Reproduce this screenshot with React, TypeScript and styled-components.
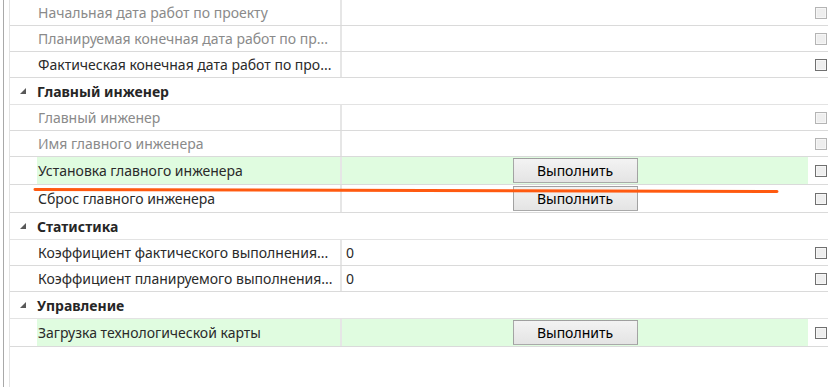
import React from 'react';
import styled, { createGlobalStyle } from 'styled-components';

const GlobalStyle = createGlobalStyle`
  html, body {
    margin: 0;
    padding: 0;
    background: #ffffff;
  }
  body {
    font-family: "Noto Sans", "Open Sans", sans-serif;
    font-size: 14px;
  }
`;

const Screen = styled.div`
  position: relative;
  width: 828px;
  height: 387px;
  overflow: hidden;
  box-sizing: border-box;
  display: flex;
  padding-left: 3px;
`;

const OuterEdge = styled.div`
  flex: 1;
  display: flex;
  border-left: 1px solid #a9a9a9;
  padding-left: 5px;
`;

const Grid = styled.div`
  flex: 1;
  display: flex;
  flex-direction: column;
  border-left: 1px solid #e3e3e3;
`;

const Row = styled.div<{ $tall?: boolean }>`
  display: grid;
  grid-template-columns: 27px 303px 468px 20px;
  height: ${(p) => (p.$tall ? 27 : 25)}px;
  border-bottom: 1px solid #dadada;
`;

const NameCell = styled.div<{ $muted?: boolean; $lit?: boolean }>`
  display: flex;
  align-items: center;
  padding-left: 1px;
  white-space: nowrap;
  overflow: hidden;
  color: ${(p) => (p.$muted ? '#8a8a8a' : '#2a2a2a')};
  background: ${(p) => (p.$lit ? '#e0fce0' : 'transparent')};
`;

const ValueCell = styled.div<{ $lit?: boolean; $action?: boolean }>`
  display: flex;
  align-items: center;
  justify-content: ${(p) => (p.$action ? 'center' : 'flex-start')};
  padding-left: ${(p) => (p.$action ? 0 : 4)}px;
  border-left: 2px solid #e6e6e6;
  color: #2a2a2a;
  background: ${(p) => (p.$lit ? '#e0fce0' : 'transparent')};
`;

const CheckCell = styled.div`
  display: flex;
  align-items: center;
  padding-left: 7px;
`;

const Box = styled.span<{ $muted?: boolean }>`
  display: block;
  width: 12px;
  height: 12px;
  box-sizing: border-box;
  border: 1px solid ${(p) => (p.$muted ? '#b4b4b4' : '#707070')};
  background: #eeeeee;
  box-shadow: inset 0 0 0 1px #f6f6f6;
`;

const RunButton = styled.button`
  width: 125px;
  height: 25px;
  padding: 0;
  border: 1px solid rgba(0, 0, 0, 0.3);
  border-radius: 0;
  background: linear-gradient(#f3f3f3, #e4e4e4);
  font-family: "Noto Sans", "Open Sans", sans-serif;
  font-size: 14px;
  color: #000000;
`;

const GroupRow = styled.div`
  display: flex;
  align-items: center;
  height: 26px;
  border-bottom: 1px solid #e3e3e3;
`;

const Toggle = styled.span`
  width: 27px;
  display: flex;
  align-items: center;
  padding-left: 10px;
  box-sizing: border-box;
`;

const GroupTitle = styled.span`
  font-weight: 700;
  color: #262626;
`;

const Marker = styled.svg`
  position: absolute;
  left: 0;
  top: 0;
  pointer-events: none;
`;

type Item =
  | { kind: 'group'; title: string }
  | { kind: 'prop'; label: string; muted?: boolean; value?: string; action?: boolean; lit?: boolean };

const items: Item[] = [
  { kind: 'prop', label: 'Начальная дата работ по проекту', muted: true },
  { kind: 'prop', label: 'Планируемая конечная дата работ по пр...', muted: true },
  { kind: 'prop', label: 'Фактическая конечная дата работ по про...' },
  { kind: 'group', title: 'Главный инженер' },
  { kind: 'prop', label: 'Главный инженер', muted: true },
  { kind: 'prop', label: 'Имя главного инженера', muted: true },
  { kind: 'prop', label: 'Установка главного инженера', action: true, lit: true },
  { kind: 'prop', label: 'Сброс главного инженера', action: true },
  { kind: 'group', title: 'Статистика' },
  { kind: 'prop', label: 'Коэффициент фактического выполнения...', value: '0' },
  { kind: 'prop', label: 'Коэффициент планируемого выполнения...', value: '0' },
  { kind: 'group', title: 'Управление' },
  { kind: 'prop', label: 'Загрузка технологической карты', action: true, lit: true },
];

export default function App() {
  return (
    <>
      <GlobalStyle />
      <Screen>
        <OuterEdge>
          <Grid>
            {items.map((it, i) =>
              it.kind === 'group' ? (
                <GroupRow key={i}>
                  <Toggle>
                    <svg width="6" height="6" viewBox="0 0 6 6">
                      <polygon points="6,0 6,6 0,6" fill="#595959" />
                    </svg>
                  </Toggle>
                  <GroupTitle>{it.title}</GroupTitle>
                </GroupRow>
              ) : (
                <Row key={i} $tall={it.action}>
                  <span />
                  <NameCell $muted={it.muted} $lit={it.lit}>
                    {it.label}
                  </NameCell>
                  <ValueCell $lit={it.lit} $action={it.action}>
                    {it.action ? <RunButton>Выполнить</RunButton> : it.value}
                  </ValueCell>
                  <CheckCell>
                    <Box $muted={it.muted} />
                  </CheckCell>
                </Row>
              )
            )}
          </Grid>
        </OuterEdge>
        <Marker width="828" height="387">
          <line x1="35" y1="189.5" x2="777" y2="191.5" stroke="#ff5a10" strokeWidth="3" strokeLinecap="round" />
        </Marker>
      </Screen>
    </>
  );
}
